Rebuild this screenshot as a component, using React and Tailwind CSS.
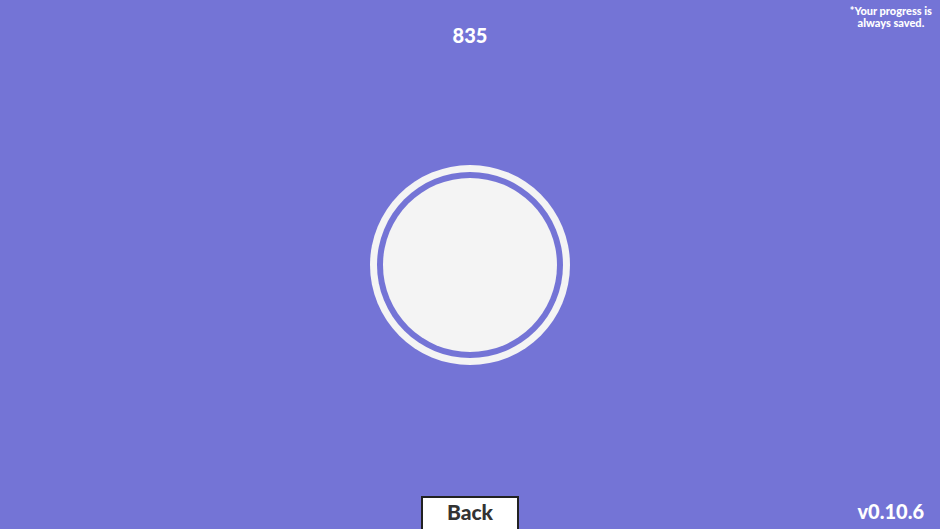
import React from "react";

const App = () => {
  return (
    <div
      className="relative h-[529px] w-full overflow-hidden bg-[#7474d6] flex flex-col items-center text-white"
      style={{ fontFamily: "Lato, 'Open Sans', sans-serif" }}
    >
      <div className="pt-[22px] text-[20px] leading-[26px] font-black">835</div>

      <div className="absolute top-[5px] right-[8px] text-center text-[11px] leading-[12px] font-black">
        *Your progress is
        <br />
        always saved.
      </div>

      <div className="flex-1 w-full flex items-center justify-center pb-[14px]">
        <div className="w-[200px] h-[200px] rounded-full bg-[#f4f4f4] flex items-center justify-center">
          <div className="w-[186px] h-[186px] rounded-full bg-[#7474d6] flex items-center justify-center">
            <div className="w-[174px] h-[174px] rounded-full bg-[#f4f4f4]" />
          </div>
        </div>
      </div>

      <button className="h-[40px] w-[98px] mb-[-7px] bg-white border-2 border-[#222] text-[#333] text-[21px] font-black leading-none pb-[10px]">
        Back
      </button>

      <div className="absolute right-[16px] bottom-[6px] text-[20px] leading-[24px] font-black">
        v0.10.6
      </div>
    </div>
  );
};

export default App;
